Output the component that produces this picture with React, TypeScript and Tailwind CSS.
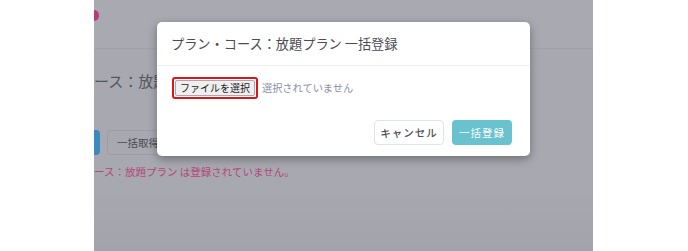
import React from 'react';

const jp = { fontFamily: '"Noto Sans CJK JP", "Noto Sans", sans-serif' };

function BulkModal() {
    return (
        <div className="absolute left-[63px] top-[22px] w-[373px] rounded-[5px] bg-white shadow-[0_3px_10px_rgba(0,0,0,0.35)]">
            {/* header */}
            <div className="h-[44px] flex items-center px-[14px] border-b border-[#eeeff3]">
                <h2 className="text-[13.2px] text-[#4b4b55] whitespace-nowrap">プラン・コース：放題プラン 一括登録</h2>
            </div>

            {/* body */}
            <div className="pt-[11px] pl-[15px] flex items-center gap-[4px]">
                <div className="w-[86px] h-[22px] rounded-[3px] border-2 border-[#e3131c] p-[1px] flex">
                    <span className="flex-1 flex items-center justify-center rounded-[2px] bg-[#efefef] border border-[#a9a9a9] text-[10px] leading-[14px] whitespace-nowrap text-[#1c1c1c]">
                        ファイルを選択
                    </span>
                </div>
                <span className="text-[10.2px] leading-[14px] whitespace-nowrap text-[#8b8fa5]">選択されていません</span>
            </div>

            {/* footer */}
            <div className="flex justify-end gap-[8px] pt-[21px] pb-[11px] pr-[18px]">
                <button className="h-[25px] w-[70px] rounded-[4px] border border-[#dfe3ee] bg-white text-[10.5px] font-medium tracking-[1px] text-[#4f4f58]">
                    キャンセル
                </button>
                <button className="h-[25px] w-[60px] rounded-[4px] bg-[#69c2ce] text-[10.5px] tracking-[1px] text-white">
                    一括登録
                </button>
            </div>
        </div>
    );
}

export default function App() {
    return (
        <div className="w-[688px] h-[251px] flex bg-white overflow-hidden" style={jp}>
            <div className="w-[94px] shrink-0" />

            {/* dimmed page behind the dialog */}
            <div className="relative w-[499px] h-[251px] overflow-hidden bg-gradient-to-b from-[#a8a8b1] from-75% to-[#a3a3ac]">
                <div className="h-[49px] border-b border-[#a1a1aa] bg-[#a9a9b2] relative">
                    <span className="absolute -left-[5px] top-[10px] w-[10px] h-[11px] rounded-full bg-[#b43d78]" />
                </div>

                <div className="pt-[24px] text-[15px] text-[#55555f] leading-none">ース：放題</div>

                <div className="mt-[42px] flex gap-[7px] h-[25px]">
                    <div className="w-[6px] rounded-r-[4px] bg-[#3a8ac0]" />
                    <div className="w-[60px] rounded-[4px] border border-[#9d9da8] flex items-center pl-[9px] text-[10.5px] text-[#4a4a55]">一括取得</div>
                    <div className="w-[60px] rounded-[4px] border border-[#9d9da8]" />
                </div>

                <div className="pt-[9px] text-[10.5px] text-[#b3477b]">ース：放題プラン は登録されていません。</div>

                <BulkModal />
            </div>
        </div>
    );
}
